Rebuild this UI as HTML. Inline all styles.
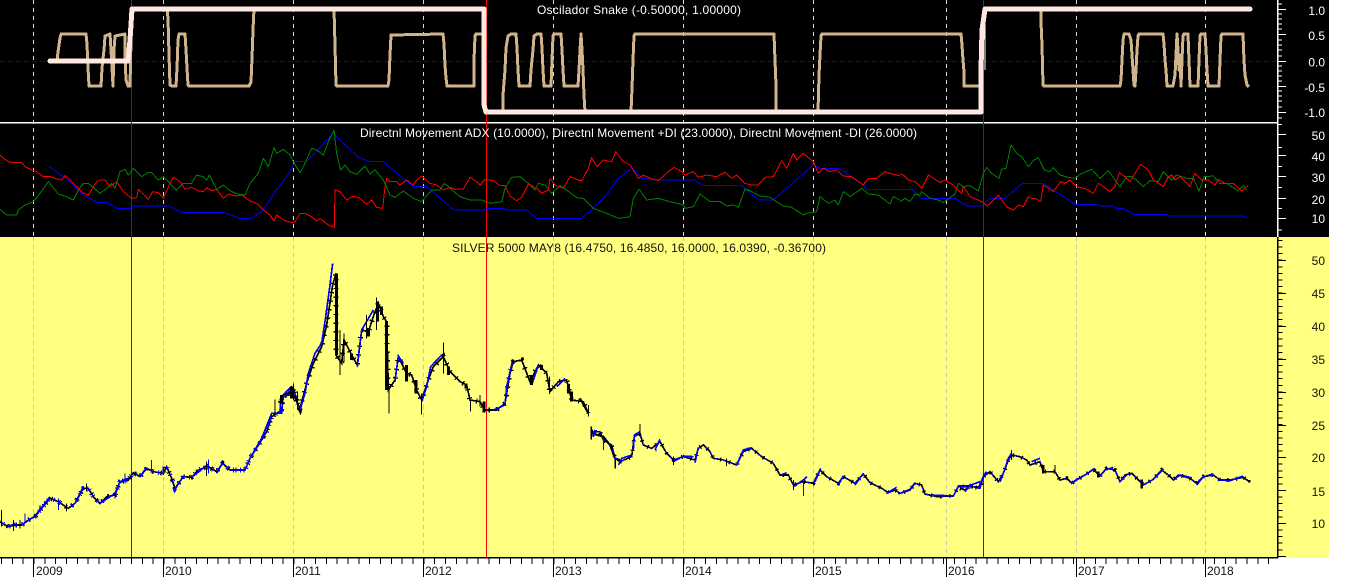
<!DOCTYPE html>
<html><head><meta charset="utf-8"><title>Silver chart</title>
<style>
html,body{margin:0;padding:0;background:#fff;overflow:hidden}
svg{display:block}
text{font-family:"Liberation Sans",Arial,sans-serif;font-size:12px}
</style></head>
<body>
<svg width="1352" height="577" viewBox="0 0 1352 577" xmlns="http://www.w3.org/2000/svg">
<rect width="1352" height="577" fill="#fff"/>
<rect width="1329" height="237" fill="#000"/>
<rect y="237" width="1329" height="321" fill="#ffff80"/>

<!-- grid -->
<g fill="none" stroke="#d8d8d8" stroke-dasharray="4 4" shape-rendering="crispEdges">
<path d="M33.5 0V237M163.5 0V237M293.5 0V237M423.5 0V237M553.5 0V237M683.5 0V237M813.5 0V237M946.5 0V237M1076.5 0V237M1205.5 0V237"/>
</g>
<g fill="none" stroke="#c4c4c4" stroke-dasharray="4 4" shape-rendering="crispEdges">
<path d="M33.5 237V557M163.5 237V557M293.5 237V557M423.5 237V557M553.5 237V557M683.5 237V557M813.5 237V557M946.5 237V557M1076.5 237V557M1205.5 237V557"/>
</g>
<path d="M0 61.5H1278" stroke="#0000e0" stroke-dasharray="5 3" fill="none" shape-rendering="crispEdges"/>
<rect y="122" width="1278" height="1.5" fill="#fff"/>

<!-- verticals -->
<path d="M131.5 0V557M983.5 0V557" stroke="#006000" fill="none" shape-rendering="crispEdges"/>
<path d="M486.5 0V557" stroke="#ff0000" fill="none" shape-rendering="crispEdges"/>

<!-- Snake oscillator tan -->
<g fill="none" stroke="#d2b48c" stroke-width="3" stroke-linejoin="round" shape-rendering="crispEdges">
<polyline points="57,61 58,52 60,38 61,34 86,34 87,44 88,68 89,86 101,86 102,68 104,50 105,36 110,34 111,50 112,68 113,86 114,50 115,36 125,34 125,55 126,80 128,86 130,86 131,40"/>
<polyline points="167,9 168,18 169,55 170,85 172,86 176,86 177,68 178,40 179,34 185,34 186,50 187,68 188,85 189,86 249,86 251,82 252,58 253,30 254,9"/>
<polyline points="334,9 335,45 336,85 337,86 388,86 389,80 390,55 391,35 443,34 444,44 445,65 446,78 447,86 474,86 474,60 475,36 476,34 483,34"/>
<polyline points="503,112 503,95 505,70 506,48 508,36 511,34 516,34 517,48 518,70 519,86 530,86 531,70 533,50 534,36 537,34 541,34 542,48 543,70 544,86 551,86 552,60 553,36 554,34 561,34 562,50 563,70 564,86 578,86 579,70 580,50 581,34 582,50 583,70 584,95 585,112"/>
<polyline points="631,112 632,88 633,60 634,36 635,34 774,34 775,60 776,85 776,112"/>
<polyline points="818,112 819,75 820,55 821,36 822,34 961,34 962,45 963,60 964,72 964,86 981,86"/>
<polyline points="1041,9 1041,22 1042,45 1043,85 1044,86 1120,86 1121,80 1122,60 1123,40 1124,34 1129,34 1131,40 1132,55 1133,70 1134,85 1135,86 1136,70 1137,50 1138,36 1139,34 1163,34 1164,44 1165,60 1166,70 1167,86 1173,86 1175,75 1176,55 1177,34 1178,50 1179,70 1180,55 1181,86 1182,60 1183,36 1184,34 1188,34 1189,60 1190,86 1198,86 1199,60 1200,36 1201,34 1205,34 1206,50 1207,70 1208,86 1219,86 1220,60 1221,36 1222,34 1243,34 1244,60 1245,75 1247,85 1249,87"/>
</g>
<path d="M132 9V41M985 9V70" stroke="#fff" fill="none" shape-rendering="crispEdges"/>
<polyline points="50,61 128,61 130,40 132,9 484,9 484,105 486,112 981,112 981,70 982,30 985,9 1250,9" fill="none" stroke="#ffe8e2" stroke-width="5" stroke-linejoin="round" stroke-linecap="round" shape-rendering="crispEdges"/>

<!-- DMI -->
<g fill="none" stroke-width="3" stroke-linejoin="round" shape-rendering="crispEdges">
<g transform="translate(0 120) scale(.33333)">
<polyline stroke="#0000ff" points="148,140 170,155 200,178 250,225 290,247 320,247 350,265 390,265 400,258 505,258 545,277 670,277 720,295 755,295 790,270 825,215 860,170 885,125 920,125 1000,40 1075,112 1110,125 1150,125 1240,200 1280,200 1350,260"/>
<polyline stroke="#008000" points="0,268 20,285 50,285 55,270 75,255 100,245 120,220 145,185 175,222 200,230 220,240 235,210 250,190 265,190 300,220 320,205 335,190 345,205 360,155 375,148 385,165 400,145 425,170 445,157 455,158 475,180 490,170 510,190 530,210 550,190 575,190 590,165 610,170 620,180 628,165 650,208 670,195 690,212 710,222 735,225 750,190 775,160 790,115 805,140 822,83 830,100 850,88 870,105 880,125 900,158 915,130 935,85 950,90 970,105 985,65 1002,30 1010,100 1022,150 1035,135 1050,155 1070,163 1095,138 1110,162 1125,150 1150,180 1170,225 1185,232 1210,213 1240,235 1265,245 1295,210 1320,210 1333,190 1350,203"/>
<polyline stroke="#ff0000" points="0,105 10,115 25,125 40,128 50,128 65,127 75,140 95,150 110,155 130,170 150,170 165,175 185,180 195,167 210,180 230,200 250,220 265,225 290,185 300,180 315,180 330,200 350,185 370,215 395,235 410,233 415,208 430,222 445,238 458,215 475,218 490,235 510,190 520,172 540,185 555,208 575,202 595,212 610,215 620,203 635,212 650,208 670,235 685,222 710,228 725,225 750,243 770,250 790,270 810,285 822,303 830,285 850,300 875,308 885,305 900,280 915,280 935,290 950,303 960,295 985,315 1003,322 1005,210 1020,215 1040,240 1060,228 1080,235 1100,253 1115,240 1130,262 1148,265 1155,200 1160,175 1170,185 1190,185 1200,195 1220,180 1240,195 1250,180 1265,168 1290,190 1310,195 1330,210 1350,202"/>
</g>
<g transform="translate(450 120) scale(.33333)">
<polyline stroke="#0000ff" points="0,262 15,270 105,270 110,265 160,265 170,270 230,270 260,295 395,295 430,265 470,225 500,180 545,145 575,175 630,180 735,180 755,196 875,196 925,240 970,240 1090,135 1110,145 1165,145 1240,195 1250,208 1350,208"/>
<polyline stroke="#008000" points="0,205 30,230 60,240 95,240 120,250 155,245 165,205 185,172 210,170 235,190 255,210 265,190 285,195 305,220 330,197 350,210 380,233 400,235 430,265 470,280 505,295 540,290 550,235 567,208 590,240 625,235 660,245 700,255 705,265 730,260 750,222 780,245 810,245 830,258 850,255 865,262 885,207 900,212 930,228 960,232 1000,258 1025,262 1060,285 1070,280 1100,275 1110,230 1135,250 1155,240 1165,255 1180,215 1200,230 1235,205 1255,222 1285,225 1320,252 1330,230 1350,240"/>
<polyline stroke="#ff0000" points="0,203 15,208 40,207 60,172 80,185 90,195 105,178 130,182 150,197 165,197 180,228 200,242 215,232 235,192 260,205 275,220 295,210 300,175 315,195 340,205 360,170 385,180 395,183 415,145 425,112 440,140 460,120 485,125 497,95 520,125 540,135 565,175 580,165 600,175 625,182 655,155 672,142 695,155 705,165 730,155 745,172 770,165 800,170 825,157 845,175 860,165 885,190 905,195 925,195 945,172 970,170 995,122 1010,145 1030,100 1040,120 1060,100 1090,125 1105,160 1120,145 1140,155 1160,150 1180,168 1205,170 1240,195 1255,175 1280,175 1305,155 1320,160 1350,168"/>
</g>
<g transform="translate(900 120) scale(.33333)">
<polyline stroke="#0000ff" points="0,208 35,208 65,235 165,235 200,258 245,258 270,235 315,235 368,190 430,190 525,253 590,253 600,258 640,258 650,265 670,265 700,283 800,283 805,288 1030,288 1042,295"/>
<polyline stroke="#008000" points="0,245 15,235 30,245 45,222 60,225 65,215 90,235 115,240 130,248 165,222 175,190 190,200 210,197 235,213 250,160 260,142 275,160 297,175 305,148 318,145 333,75 350,100 365,110 385,140 400,122 415,113 433,150 450,155 460,143 480,165 505,172 525,175 540,163 575,148 600,175 625,152 645,180 660,200 680,170 695,170 710,180 730,200 750,182 775,185 790,155 815,180 830,165 860,175 880,175 897,213 912,170 940,168 960,190 980,190 1015,213 1030,197 1040,210"/>
<polyline stroke="#ff0000" points="0,163 10,165 25,180 45,185 65,205 85,165 100,175 120,187 135,180 160,195 185,222 190,200 210,230 245,245 262,258 295,225 320,260 340,270 355,255 370,260 385,230 395,235 405,235 422,245 430,195 460,215 482,185 495,190 510,180 530,200 555,205 580,220 595,190 610,200 630,215 645,200 658,158 675,170 690,185 705,160 722,133 745,150 760,180 790,200 805,170 815,165 825,180 840,170 870,200 885,160 905,180 925,180 945,195 955,178 975,190 1000,190 1025,213 1045,197"/>
</g>
</g>

<!-- Price -->
<defs>
<polyline id="p0" points="0,845 15,855 25,860 45,855 65,855 85,840 105,830 125,805 150,775 175,785 205,805 225,790 250,745 265,745 280,770 300,790 320,770 345,765 360,725 385,720 400,698 420,710 440,685 460,695 490,700 500,680 515,715 525,745 550,710 575,712 595,690 625,680 650,695 668,670 690,690 735,690 750,655 785,600 800,575 815,530 845,510 850,470 880,445 895,495"/>
<polyline id="p1" points="0,460 10,440 35,425 60,475 80,400 100,340 125,290 140,225 158,105 168,70 168,315 185,340 192,270 215,315 232,345 245,240 265,245 280,200 295,160 310,200 320,215 325,420 345,390 355,320 380,370 395,375 410,420 425,450 445,390 460,350 490,320 510,365 540,395 560,405 570,450 600,455 615,480 650,480 675,460 690,370 700,335 725,330 750,395 775,345 800,370 810,425 835,395 860,390 875,450 910,455 925,490"/>
<polyline id="p2" points="935,550 970,560 990,585 1005,625 1020,630"/>
<polyline id="p3" points="35,95 60,95 70,120 95,135 105,175 120,185 155,170 163,110 180,100 190,135 215,145 240,125 260,160 280,180 310,170 345,180 355,145 370,135 390,155 400,175 430,180 470,195 490,155 515,145 545,170 580,190 600,225 625,225 640,255 670,245 700,250 720,210 740,230 775,250 790,230 825,250 850,222 870,248 905,265 925,278 945,270 960,280 990,270 1005,250 1025,255 1035,282 1070,290 1120,288 1135,260 1165,260 1200,260"/>
<polyline id="p4" points="0,175 15,180 30,168 60,175 70,140 90,125 115,155 130,130 145,90 155,75 180,80 200,90 210,105 240,95 250,125 285,125 300,150 320,145 335,160 350,150 375,135 400,118 420,138 440,115 465,120 480,155 495,135 515,130 540,155 550,165 580,148 605,120 625,135 640,150 655,135 690,145 710,160 730,140 760,135 780,150 810,150 850,142 868,155"/>
</defs>
<g fill="none" stroke-linejoin="miter" shape-rendering="crispEdges">
<g transform="translate(0 240) scale(.33333)">
<use href="#p0" stroke="#000" stroke-width="5"/>
<use href="#p0" stroke="#0000ff" stroke-width="5" stroke-dasharray="10 14"/>
<use href="#p0" stroke="#000" stroke-width="14" stroke-dasharray="4 20"/>
<use href="#p0" stroke="#0000ff" stroke-width="14" stroke-dasharray="3 18" stroke-dashoffset="10"/>
<g stroke="#0000ff" stroke-width="5">
<polyline points="25,860 45,850"/><polyline points="65,855 105,828 150,770"/><polyline points="225,790 250,740"/><polyline points="300,790 345,760 360,725 385,715"/><polyline points="420,710 440,682"/><polyline points="490,705 490,680"/><polyline points="525,748 550,708"/><polyline points="575,712 625,672"/><polyline points="650,700 668,668"/><polyline points="690,690 735,690 750,655 785,595 815,520 845,520 850,465 875,438"/>
</g>
<path stroke="#000" stroke-width="3" d="M4 810V860M40 840V873M60 840V866M175 775V810M200 790V815M260 730V755M345 760V775M620 665V708M455 660V690M825 478V520M880 430V480M893 455V510"/>
<path stroke="#0000ff" stroke-width="3" d="M75 820V845M120 795V815M175 775V810M375 700V730M455 660V690M625 658V700"/>
</g>
<g transform="translate(280 250) scale(.33333)">
<use href="#p1" stroke="#000" stroke-width="5"/>
<use href="#p2" stroke="#000" stroke-width="6"/>
<use href="#p1" stroke="#000" stroke-width="15" stroke-dasharray="4 22"/>
<g stroke="#0000ff" stroke-width="5">
<polyline points="0,490 2,440 30,435"/><polyline points="60,480 75,430 85,370 105,310 125,280 135,215 150,105 158,40"/><polyline points="232,350 245,240 280,180"/><polyline points="345,395 355,318 370,340"/><polyline points="425,455 440,410 452,350 485,315"/><polyline points="640,480 675,465 680,410 697,335"/><polyline points="755,405 775,345"/><polyline points="830,410 855,385"/><polyline points="940,560 950,540"/>
</g>
<path stroke="#000" stroke-width="9" d="M169 70V315M320 213V420M5 435V460M35 410V445M215 310V330M265 235V260M293 155V215M305 170V195M380 345V395M408 390V430M505 350V375M558 400V415M755 375V405M785 345V360M865 402V430M875 425V455M612 455V488"/>
<path stroke="#000" stroke-width="3" d="M180 240V375M192 250V335M260 195V265M290 142V240M327 420V490M424 430V494M490 277V370M572 450V485M600 435V470M808 380V432M925 465V500M935 530V568M970 560V598M1005 620V655"/>
</g>
<g transform="translate(580 400) scale(.33333)">
<polyline stroke="#000" stroke-width="6" points="0,-5 25,40"/>
<use href="#p3" stroke="#000" stroke-width="5"/>
<use href="#p3" stroke="#0000ff" stroke-width="5" stroke-dasharray="8 16"/>
<use href="#p3" stroke="#000" stroke-width="12" stroke-dasharray="4 24"/>
<g stroke="#0000ff" stroke-width="5">
<polyline points="38,110 45,90"/><polyline points="115,195 125,175 155,165"/><polyline points="160,150 163,105 180,95"/><polyline points="225,150 240,118"/><polyline points="280,185 310,168 340,170"/><polyline points="345,188 355,142"/><polyline points="470,195 490,150 515,143"/><polyline points="605,225 620,218"/><polyline points="640,260 670,240 680,230"/><polyline points="705,245 722,205"/><polyline points="775,255 790,228"/><polyline points="825,255 850,220"/><polyline points="920,280 950,262"/><polyline points="955,282 990,268 1005,248"/><polyline points="1055,285 1120,288 1135,258 1165,258 1200,245"/>
</g>
<path stroke="#000" stroke-width="3" d="M33 80V118M107 175V206M180 72V110M280 170V195M440 175V198M640 240V270"/>
<path stroke="#0000ff" stroke-width="3" d="M70 120V150M670 245V288M228 130V155"/>
</g>
<g transform="translate(960 430) scale(.33333)">
<use href="#p4" stroke="#000" stroke-width="5"/>
<use href="#p4" stroke="#0000ff" stroke-width="5" stroke-dasharray="8 14"/>
<use href="#p4" stroke="#000" stroke-width="12" stroke-dasharray="4 22"/>
<g stroke="#0000ff" stroke-width="5">
<polyline points="15,185 30,165 35,175"/><polyline points="55,175 72,135 80,125"/><polyline points="120,155 130,130 145,85 155,70"/><polyline points="215,95 240,85"/><polyline points="335,160 350,148 375,135 405,115"/><polyline points="420,138 435,120 460,112"/><polyline points="480,155 500,135"/><polyline points="550,165 580,148 610,118"/><polyline points="640,150 660,135 690,142"/><polyline points="710,165 730,140 760,132"/><polyline points="775,150 810,152 850,138"/>
</g>
<path stroke="#000" stroke-width="3" d="M155 60V90M285 105V130"/>
<path stroke="#000" stroke-width="8" d="M250 105V130M415 125V142M545 148V175M868 150V158"/>
</g>
</g>

<!-- Right axes -->
<g fill="none" shape-rendering="crispEdges">
<path d="M1277.5 0V123" stroke="#fff" stroke-width="1.5"/>
<path d="M1278 4H1282M1278 9.5H1286M1278 14H1282M1278 19H1282M1278 24H1282M1278 29H1282M1278 34.5H1286M1278 40H1282M1278 45H1282M1278 50H1282M1278 56H1282M1278 61.5H1286M1278 66H1282M1278 71H1282M1278 76H1282M1278 81H1282M1278 86.5H1286M1278 91H1282M1278 96H1282M1278 101H1282M1278 107H1282M1278 112.5H1286M1278 118H1282" stroke="#fff"/>
<path d="M1277.5 123V237" stroke="#fff" stroke-width="1.5"/>
<path d="M1278 124.5H1282M1278 134.5H1286M1278 147.5H1282M1278 155.5H1286M1278 166.5H1282M1278 176.5H1286M1278 187.5H1282M1278 198.5H1286M1278 208.5H1282M1278 218.5H1286M1278 230H1282" stroke="#fff"/>
<path d="M1277.5 237V558" stroke="#000" stroke-width="1.5"/>
<path d="M1280 240V558" stroke="#000" stroke-width="5" stroke-dasharray="1 5.58"/>
<path d="M1278 260.5H1286M1278 293.5H1286M1278 326.5H1286M1278 359.5H1286M1278 392.5H1286M1278 425.5H1286M1278 457.5H1286M1278 490.5H1286M1278 523.5H1286M1278 556.5H1286" stroke="#000"/>
<path d="M0 557.5H1278" stroke="#000" stroke-width="1.5"/>
<path d="M1 561H1278" stroke="#000" stroke-width="6" stroke-dasharray="1 9.83"/>
<path d="M33.5 557V577M163.5 557V577M293.5 557V577M423.5 557V577M553.5 557V577M683.5 557V577M813.5 557V577M946.5 557V577M1076.5 557V577M1205.5 557V577" stroke="#000"/>
</g>

<!-- Labels -->
<g fill="#fff" text-anchor="end">
<text x="1325" y="15">1.0</text><text x="1325" y="40">0.5</text><text x="1325" y="66.5">0.0</text><text x="1325" y="92">-0.5</text><text x="1325" y="117">-1.0</text>
<text x="1325" y="140">50</text><text x="1325" y="161">40</text><text x="1325" y="182">30</text><text x="1325" y="204">20</text><text x="1325" y="223">10</text>
</g>
<g fill="#111" text-anchor="end">
<text x="1325" y="265">50</text><text x="1325" y="298">45</text><text x="1325" y="331">40</text><text x="1325" y="364">35</text><text x="1325" y="397">30</text><text x="1325" y="430">25</text><text x="1325" y="462">20</text><text x="1325" y="496">15</text><text x="1325" y="528">10</text>
</g>
<g fill="#111">
<text x="36" y="575">2009</text><text x="165" y="575">2010</text><text x="295" y="575">2011</text><text x="425" y="575">2012</text><text x="555" y="575">2013</text><text x="685" y="575">2014</text><text x="815" y="575">2015</text><text x="948" y="575">2016</text><text x="1078" y="575">2017</text><text x="1207" y="575">2018</text>
</g>
<text x="537" y="14" fill="#fff" textLength="204" lengthAdjust="spacing">Oscilador Snake (-0.50000, 1.00000)</text>
<text x="360" y="137" fill="#fff" textLength="557" lengthAdjust="spacing">Directnl Movement ADX (10.0000), Directnl Movement +DI (23.0000), Directnl Movement -DI (26.0000)</text>
<text x="452" y="252" fill="#111" textLength="374" lengthAdjust="spacing">SILVER 5000 MAY8 (16.4750, 16.4850, 16.0000, 16.0390, -0.36700)</text>
</svg>
</body></html>
